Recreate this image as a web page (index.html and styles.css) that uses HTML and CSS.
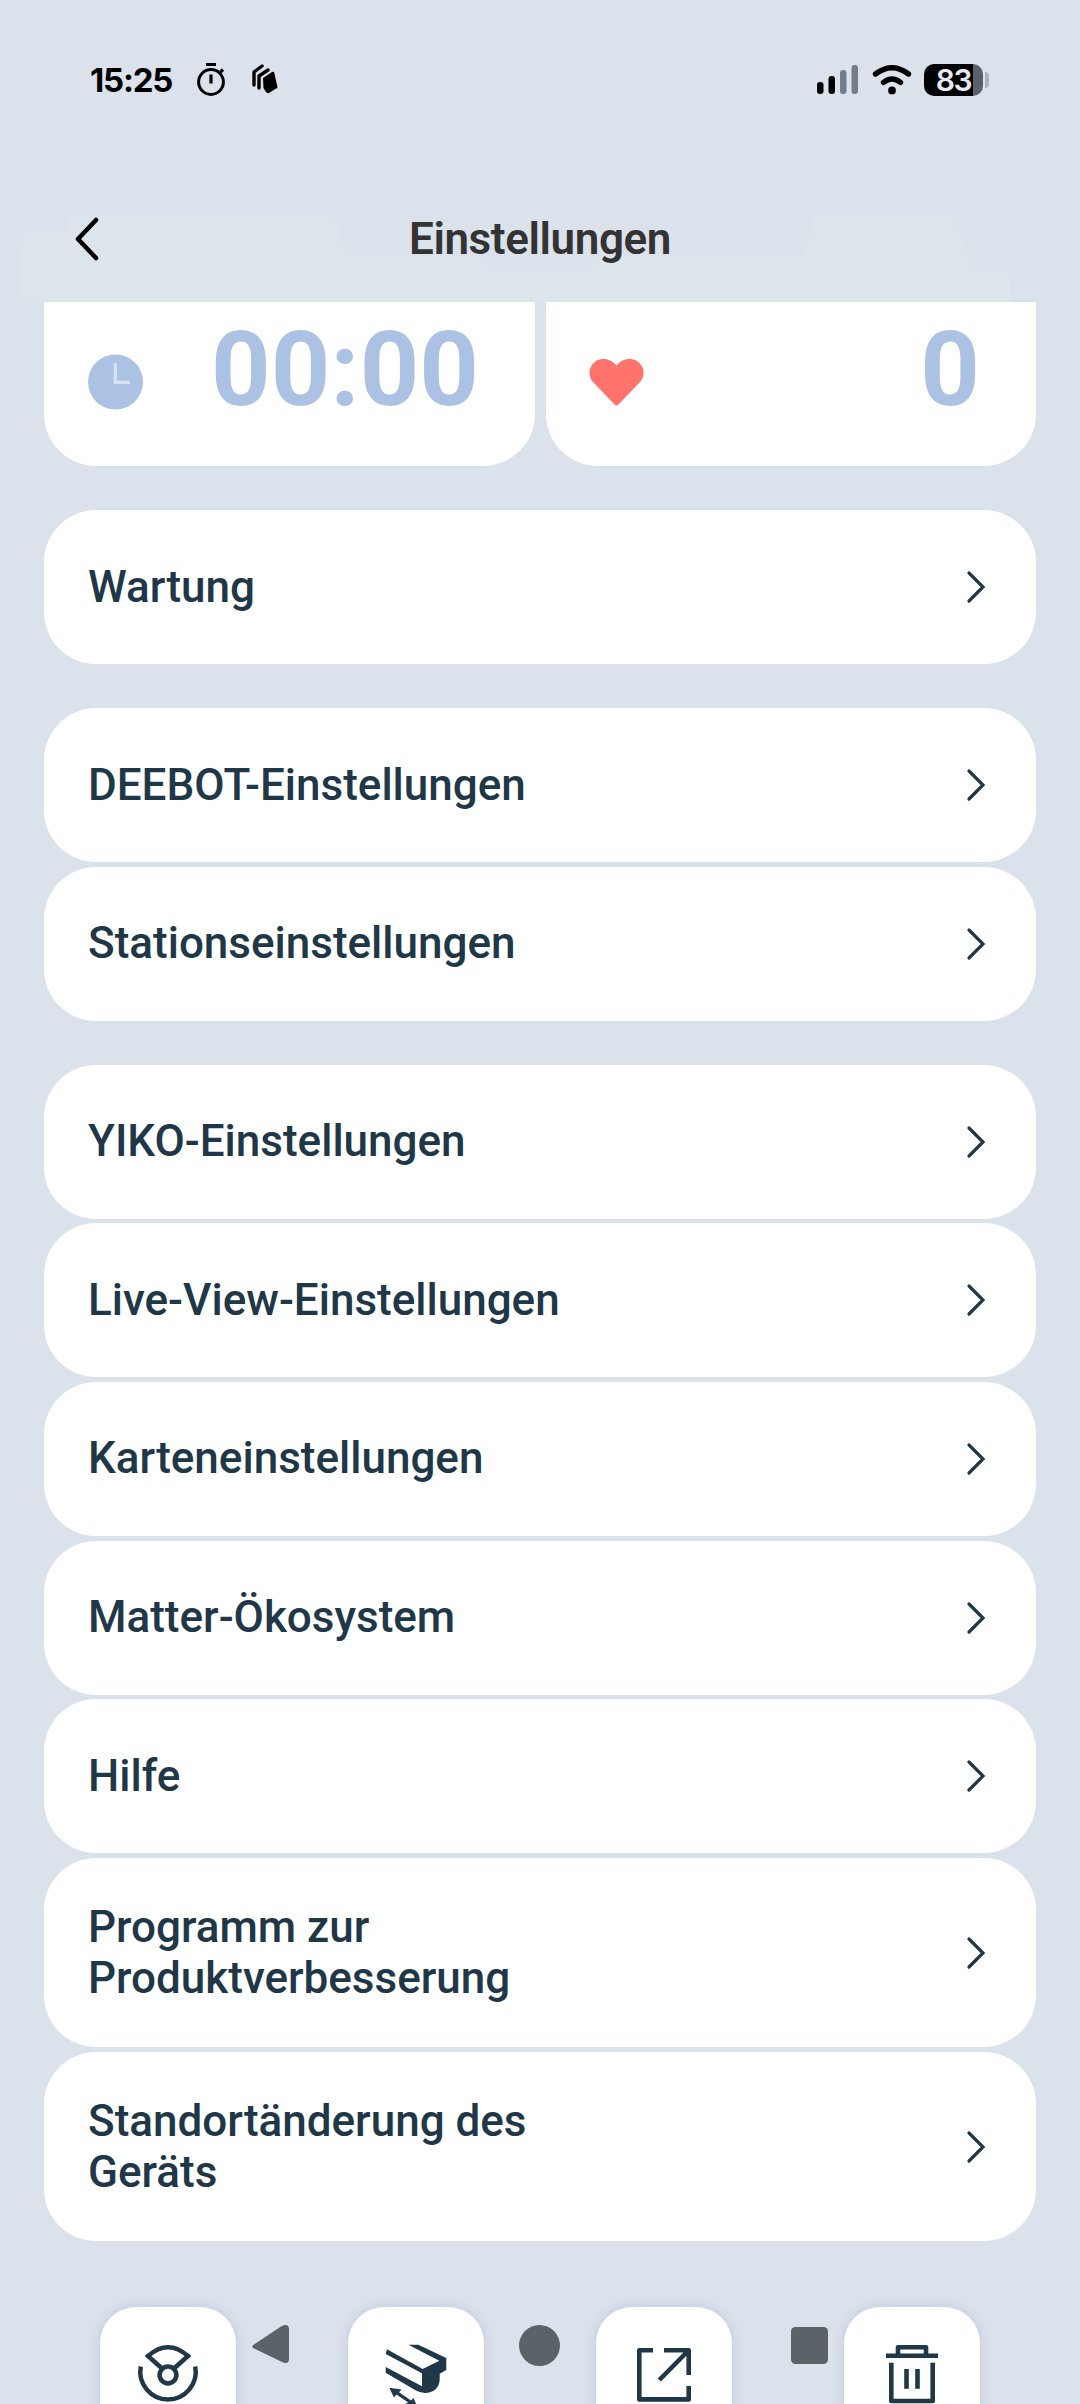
FILE: index.html
```html
<!DOCTYPE html>
<html lang="de">
<head>
<meta charset="utf-8">
<title>Einstellungen</title>
<link rel="stylesheet" href="styles.css">
</head>
<body>
<div class="screen">
  <div class="statusbar">
    <div class="status-left">
      <span class="time">15:25</span>
      <svg class="timer" width="30" height="36" viewBox="0 0 30 36" fill="none" stroke="#000"><circle cx="15" cy="20" r="12.4" stroke-width="3"/><path d="M10 2.5h10M15 12.5v9M24.500 10l2.500-2.500" stroke-width="3.200"/></svg>
      <svg class="cards" width="26" height="30" viewBox="0 0 26 30"><path d="M2 21V8L10 2M7 24V12L16 6" fill="none" stroke="#000" stroke-width="3.400" stroke-linejoin="round" stroke-linecap="round"/><path d="M11 14 20 8Q22 7 22.300 9L25.500 23Q25.500 24.500 24 24.500L17 29Q15 29.500 14 28L11.500 24Z"/></svg>
    </div>
    <div class="status-right">
      <svg class="signal" width="42" height="30" viewBox="0 0 42 30"><rect x="0" y="17" width="6.500" height="12" rx="3"/><rect x="11.500" y="11" width="6.500" height="18" rx="3"/><g fill="#737f88"><rect x="23" y="5" width="6.500" height="24" rx="3"/><rect x="34.500" y="0" width="6.500" height="29" rx="3"/></g></svg>
      <svg class="wifi" width="40" height="30" viewBox="0 0 40 30"><path d="M3.500 9Q20-3.500 36.500 9M11.500 17.300Q20 10.800 28.500 17.300" fill="none" stroke="#000" stroke-width="5.400" stroke-linecap="round"/><circle cx="20" cy="25.400" r="3.900"/></svg>
      <span class="battery">83</span><span class="battery-tip"></span>
    </div>
  </div>
  <header class="header">
    <svg class="header-tint" width="1080" height="98" viewBox="0 0 1080 98"><path opacity=".55" d="M17 98 24 28H70V10H325Q340 10 345 53V98ZM805 53 815 10H955L968 53V98H805Z"/><path d="M345 98V53H480L490 68H590L600 53H805V98ZM968 68H1004Q1010 68 1010 74V98H968Z"/></svg>
    <svg class="back" width="26" height="46" viewBox="0 0 26 46"><path d="M22 4 4 23 22 42" /></svg>
    <h1 class="title">Einstellungen</h1>
  </header>
  <main class="content">
    <section class="stats">
      <div class="stat">
        <svg width="56" height="56" viewBox="0 0 56 56"><circle cx="27.500" cy="28" r="27.500" fill="#acc2e4"/><path d="M27.300 9V28.300H42" fill="none" stroke="#d8e1ee" stroke-width="3.300"/></svg>
        <span class="value">00:00</span>
      </div>
      <div class="stat heart">
        <svg width="56" height="56" viewBox="0 0 56 56"><path d="M27.500 12.700C20.500 3.500 7 4 2 13.500C-1.500 21 1.500 26.500 4.500 29.500L25.500 51.500Q27.500 53.500 29.500 51.500L50.500 29.500C53.500 26.500 56.500 21 53 13.500C48 4 34.500 3.500 27.500 12.700Z" fill="#ff736c"/></svg>
        <span class="value">0</span>
      </div>
    </section>
    <section class="group">
      <div class="row"><span class="label">Wartung</span><svg class="chev" viewBox="0 0 20 34"><path d="M3 3 17 17 3 31"/></svg></div>
    </section>
    <section class="group">
      <div class="row"><span class="label">DEEBOT-Einstellungen</span><svg class="chev" viewBox="0 0 20 34"><path d="M3 3 17 17 3 31"/></svg></div>
      <div class="row"><span class="label">Stationseinstellungen</span><svg class="chev" viewBox="0 0 20 34"><path d="M3 3 17 17 3 31"/></svg></div>
    </section>
    <section class="group">
      <div class="row"><span class="label">YIKO-Einstellungen</span><svg class="chev" viewBox="0 0 20 34"><path d="M3 3 17 17 3 31"/></svg></div>
      <div class="row"><span class="label">Live-View-Einstellungen</span><svg class="chev" viewBox="0 0 20 34"><path d="M3 3 17 17 3 31"/></svg></div>
      <div class="row"><span class="label">Karteneinstellungen</span><svg class="chev" viewBox="0 0 20 34"><path d="M3 3 17 17 3 31"/></svg></div>
      <div class="row"><span class="label">Matter-Ökosystem</span><svg class="chev" viewBox="0 0 20 34"><path d="M3 3 17 17 3 31"/></svg></div>
      <div class="row"><span class="label">Hilfe</span><svg class="chev" viewBox="0 0 20 34"><path d="M3 3 17 17 3 31"/></svg></div>
      <div class="row tall"><span class="label">Programm zur Produktverbesserung</span><svg class="chev" viewBox="0 0 20 34"><path d="M3 3 17 17 3 31"/></svg></div>
      <div class="row tall"><span class="label">Standortänderung des Geräts</span><svg class="chev" viewBox="0 0 20 34"><path d="M3 3 17 17 3 31"/></svg></div>
    </section>
  </main>
  <footer class="actions">
    <div class="tile"><svg viewBox="0 0 136 136" fill="none" stroke="#203748" stroke-width="4.500"><circle cx="68" cy="68" r="8.400"/><path d="M40.800 59.500A27.700 27.700 0 1 0 95.200 59.500M61.500 61 48 49Q68 31.500 88 49L74.500 61" /></svg></div>
    <div class="tile"><svg viewBox="0 0 136 136" fill="#203748"><path fill-rule="evenodd" d="M60.300 37.700H70.300L98.300 51V63L91.700 66.700V72C91.700 81 85 86 77 86Q71 85.500 67 83L37.700 65.700V60L74 79.300V66.300L37.700 47 39 42.300 74.700 62 91.300 53.700Z"/><path d="M41.300 80.700 53.500 82.500 51 85.300 63 93.500 65.500 91 68.500 98 57 97 60.200 95.500 48.500 87.500 46 90.500Z"/></svg></div>
    <div class="tile"><svg viewBox="0 0 136 136" fill="none" stroke="#203748" stroke-width="4.600" stroke-linejoin="round"><path d="M57 43.300H43.300V92.400H92.700V79M68 43.300H92.700V68M92 44 63.300 73"/></svg></div>
    <div class="tile"><svg viewBox="0 0 136 136" fill="none" stroke="#203748" stroke-width="4.600" stroke-linejoin="round"><path d="M42 48.700H94M54 48V40.200H82V48M47.300 55.700V94H88.700V55.700M62.500 62V81.700M73.500 62V81.700"/></svg></div>
  </footer>
  <svg class="navkeys" width="1080" height="60" viewBox="0 0 1080 60" fill="#5b6369"><path d="M254 28.500 281 10.500Q289 6.500 289 13.500V43Q289 49.500 281 45.500L254 32.500Q250.500 30.500 254 28.500Z"/><circle cx="539.500" cy="29.500" r="20.500"/><rect x="791" y="11" width="37" height="37" rx="4.500"/></svg>
</div>
</body>
</html>
```
FILE: styles.css
```css
* { box-sizing: border-box; }
html, body { margin: 0; }
body {
  background: #dbe2ec;
  font-family: Roboto, "Liberation Sans", sans-serif;
  color: #203748;
}
svg { display: block; flex: none; }

.screen {
  position: relative;
  width: 1080px;
  height: 2404px;
  overflow: hidden;
  display: flex;
  flex-direction: column;
}

.statusbar {
  height: 204px;
  flex: none;
  padding: 60px 91px 0 90px;
  display: flex;
  justify-content: space-between;
  align-items: flex-start;
  color: #000;
}
.status-left, .status-right { display: flex; height: 40px; align-items: center; }
.time { font: 700 33px/40px Inter, sans-serif; width: 106px; letter-spacing: -1.2px; }
.timer { margin-right: 26px; }
.cards { margin-top: -2px; }
.signal { margin-right: 13px; }
.wifi { margin-right: 12px; }
.battery {
  width: 59px;
  height: 32px;
  border-radius: 10px;
  background: linear-gradient(90deg, #000 49px, #59616a 49px);
  color: #e4eaf3;
  font: 600 30px/33px Inter, sans-serif;
  letter-spacing: -1.5px;
  text-align: center;
}
.battery-tip {
  width: 4px;
  height: 16px;
  margin-left: 2px;
  border-radius: 0 4px 4px 0;
  background: #adb6bf;
}

.header {
  position: relative;
  height: 98px;
  flex: none;
  display: flex;
  justify-content: center;
  padding-top: 8px;
}
.header-tint { position: absolute; left: 0; top: 0; fill: #dde5ed; }
.back { position: absolute; left: 74px; top: 12px; fill: none; stroke: #000; stroke-width: 4.5; stroke-linecap: round; stroke-linejoin: round; }
.title {
  position: relative;
  margin: 0;
  font-size: 44px;
  font-weight: 600;
  line-height: 54px;
  letter-spacing: -0.4px;
  color: #333;
}

.content {
  display: flex;
  flex-direction: column;
  gap: 44px;
  padding: 0 44px;
  flex: none;
}
.stats { display: grid; grid-template-columns: 491px 490px; gap: 11px; height: 164px; }
.stat {
  display: flex;
  justify-content: space-between;
  padding: 0 56px 0 44px;
  background: #fff;
  border-radius: 0 0 52px 52px;
}
.stat.heart { padding-left: 43px; }
.stat svg { margin-top: 52px; }
.stat.heart svg { margin-top: 51px; }
.value {
  font-size: 104px;
  font-weight: 700;
  line-height: 120px;
  margin-top: 8px;
  color: #acc2e4;
}

.group { display: flex; flex-direction: column; gap: 4.67px; }
.row {
  display: flex;
  align-items: center;
  justify-content: space-between;
  height: 154px;
  padding: 0 50px 0 44px;
  background: #fff;
  border-radius: 52px;
}
.tall { height: 189px; padding-top: 1px; }
.label { max-width: 480px; font-size: 44px; font-weight: 500; line-height: 51px; }
.chev { width: 20px; height: 34px; fill: none; stroke: #203748; stroke-width: 3.2; stroke-linecap: round; }

.actions { display: flex; gap: 112px; padding: 66px 100px 0; flex: none; }
.tile {
  width: 136px;
  height: 136px;
  border-radius: 36px;
  background: #fff;
  box-shadow: 0 0 12px rgba(150, 165, 195, 0.4);
}
.navkeys { position: absolute; left: 0; top: 2316px; }
```
